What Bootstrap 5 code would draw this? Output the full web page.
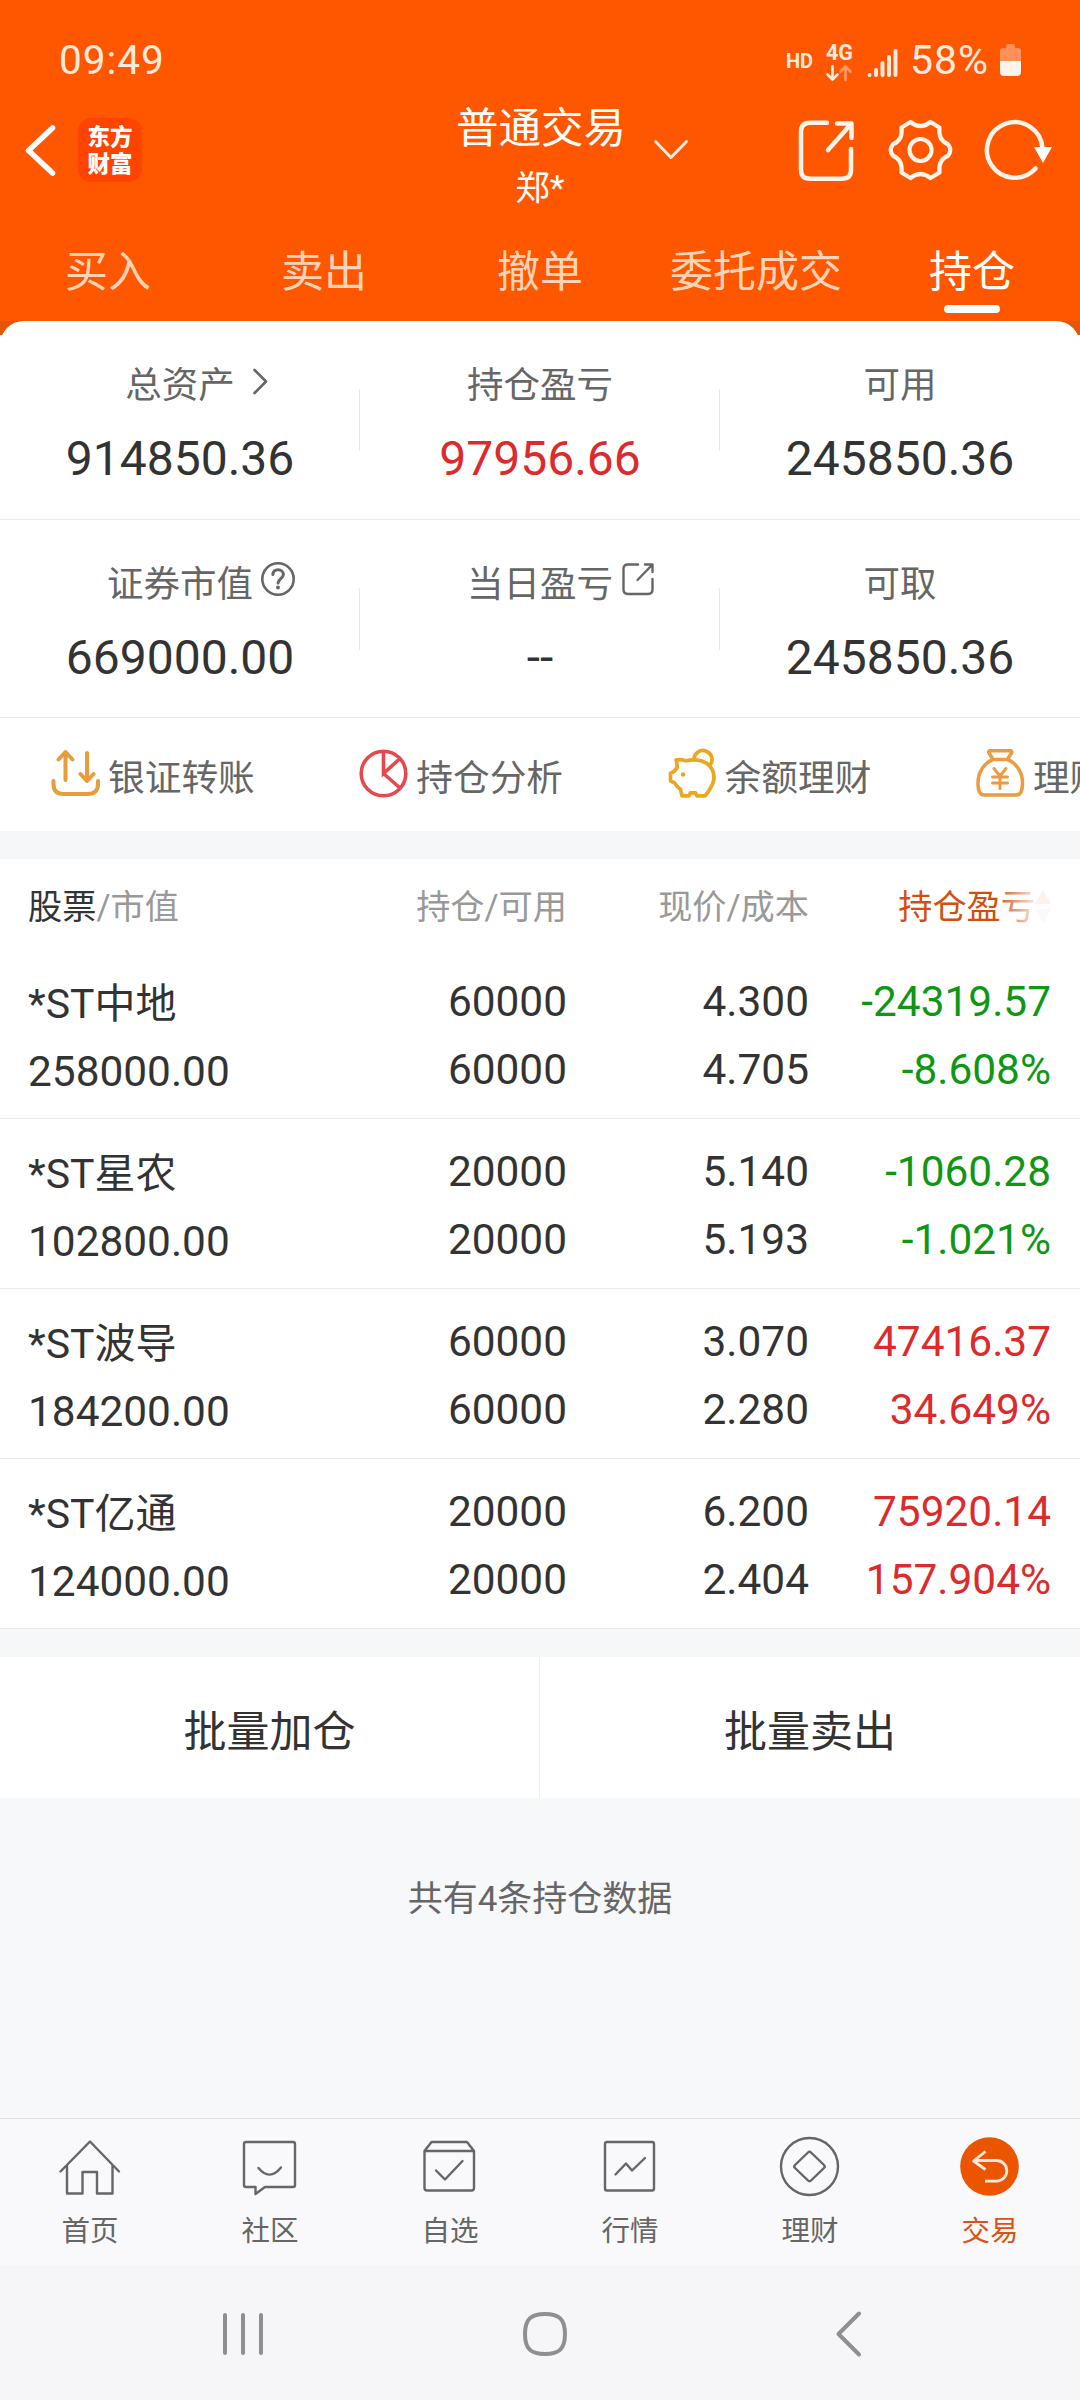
<!DOCTYPE html>
<html lang="zh-CN">
<head>
<meta charset="utf-8">
<meta name="viewport" content="width=device-width, initial-scale=1">
<title>普通交易 - 持仓</title>
<link href="https://cdn.jsdelivr.net/npm/bootstrap@5.3.0/dist/css/bootstrap.min.css" rel="stylesheet">
<style>
body{font-family:Roboto,"Noto Sans CJK SC",sans-serif;background:#f7f8fa;color:#333;width:1080px;height:2400px;overflow:hidden}
svg{display:block;flex:none;overflow:visible}
.app-head{background:#ff5700;color:#fff}
.status-bar{height:88px;padding:32px 59px 0 59px;color:#ffeadd}
.clock{font-size:40.5px;letter-spacing:1px;line-height:57px}
.hd-tag{font-size:20px;font-weight:700;line-height:58px;width:27px;margin-right:13px}
.net-tag{font-size:21.5px;font-weight:700;line-height:20px;width:26px;margin-right:15px;padding-top:11px}
.pct{font-size:41px;line-height:57px;width:84px;margin-left:11px;margin-right:6px;letter-spacing:1px}
.title-bar{height:127px}
.title-side{height:124px;width:456px;flex:none}
.title-mid{padding-top:11px;width:168px}
.title-main{font-size:42.5px;line-height:60px;white-space:nowrap}
.title-user{font-size:34.5px;line-height:58px}
.drop-ic{left:196px;top:49px}
.logo-tile{width:64px;height:64px;border-radius:13px;background:#ff4300;font-size:22.5px;line-height:27px;font-weight:900;margin-left:20px;padding-top:6px}
.tab-row{height:106px}
.tab-it{font-size:43px;line-height:115px;color:#ffd3b8;height:106px}
.tab-it.active{color:#fff}
.tab-it.active::after{content:"";position:absolute;left:50%;margin-left:-28px;bottom:8px;width:56px;height:8px;border-radius:4px;background:#fff}
.sheet-wrap{background:linear-gradient(#e65602 14px,#fff 14px)}
.sheet{background:#fff;border-radius:24px 24px 0 0}
.stat-row{height:198px;border-bottom:1px solid #e9e9e9}
.stat-row.first-row{height:199px}
.stat-cell{padding-top:38px}
.stat-cell+.stat-cell::before{content:"";position:absolute;left:-1px;top:68px;width:1px;height:62px;background:#e9e9e9}
.stat-lab{font-size:36.5px;line-height:54px;color:#666}
.stat-lab svg{position:absolute;top:35px}
.stat-val{font-size:48px;line-height:60px;margin-top:16px}
.c-red{color:#dc2b2c}.c-green{color:#109615}
.quick{height:113px;padding-left:51px;overflow:hidden}
.quick-it{width:308.3px;flex:none;font-size:36.7px;color:#666;line-height:60px;gap:8px;white-space:nowrap}
.quick-it svg{margin-top:-2px}
.quick-it span{padding-top:8px}
.band{height:28px;background:#f6f7f9}
.grid-row{padding:0 29px 0 28px}
.c1{width:300px}.c2{width:239px}.c3{width:242px}.c4{width:242px}
.thead-row{height:90px;font-size:34.2px;line-height:97px;color:#999}
.sort-col{position:relative;color:#d2500f;padding-right:16px}
.sort-col::after{content:"";position:absolute;right:-1px;top:20px;width:56px;height:56px;background:linear-gradient(90deg,rgba(255,255,255,0),rgba(255,255,255,.85) 70%)}
.sort-col svg{position:absolute;right:0;top:31px}
.hold-row{height:170px;border-bottom:1px solid #e9e9e9;font-size:42.4px;line-height:68px;padding-top:19px}
.hold-row .c1{padding-top:2px}
.stk{font-size:41px}
.bulk{height:141px;background:#fff;font-size:43px;line-height:150px}
.bulk>div:first-child{border-right:1px solid #eee}
.note-line{font-size:35px;line-height:60px;color:#666;padding-top:72px;height:320px}
.bottom-nav{height:147px;border-top:1px solid #e0e0e2;background:#f9f9fb;color:#666}
.nav-it svg{margin-top:13px}
.nav-it{font-size:28.5px;line-height:47px}
.nav-it.active{color:#dc5210}
.sys-nav{height:135px;background:#f6f6f8}
</style>
</head>
<body>
<header class="app-head">
  <div class="status-bar d-flex justify-content-between">
    <div class="clock">09:49</div>
    <div class="d-flex">
      <div class="hd-tag">HD</div>
      <div class="net-tag">4G
        <svg width="26" height="16" viewBox="0 0 26 16" fill="none" stroke-width="2.6" stroke-linecap="round" stroke-linejoin="round" style="margin-top:2px"><path stroke="#ffeadd" d="M6.500 1v13M1.500 9.500l5 5 5-5"/><path stroke="#ff9a66" d="M19.500 15V2M14.500 6.500l5-5 5 5"/></svg>
      </div>
      <svg width="32" height="56" viewBox="867 32 32 56" stroke="#ffeadd" stroke-width="4" stroke-linecap="round"><path d="M869.500 75v.01M876 70v5M882.500 63v12M889 57v18M895.500 51v24"/></svg>
      <div class="pct">58%</div>
      <svg width="21" height="56" viewBox="1000 32 21 56"><path fill="#ff905a" d="M1006 48v-2q0-2 2-2h5q2 0 2 2v2h3q3 0 3 3v10h-21V51q0-3 3-3z"/><path fill="#fff3ec" d="M1000 61h21v11q0 4-4 4h-13q-4 0-4-4z"/></svg>
    </div>
  </div>
  <div class="title-bar d-flex">
    <div class="title-side d-flex align-items-center">
      <svg width="34" height="64" viewBox="24 118 34 64" fill="none" stroke="#fff" stroke-width="5.500" stroke-linecap="round" stroke-linejoin="round" class="ms-4"><path d="M52.500 128L28.500 150.500l24 22.500"/></svg>
      <div class="logo-tile text-center">东方<br>财富</div>
    </div>
    <div class="title-mid text-center position-relative">
      <div class="title-main">普通交易</div>
      <div class="title-user">郑*</div>
      <svg class="drop-ic position-absolute" width="38" height="26" viewBox="652 137 38 26" fill="none" stroke="#fff1e8" stroke-width="2.800" stroke-linecap="round" stroke-linejoin="round"><path d="M655.500 141.500L671 157.500l15.500-16"/></svg>
    </div>
    <div class="title-side d-flex align-items-center justify-content-end pe-4">
      <svg width="92" height="66" viewBox="796 117 92 66" fill="none" stroke="#fff3ea" stroke-width="4.500" stroke-linecap="round" stroke-linejoin="round"><path d="M827 122.700H810q-9 0-9 9v38q0 9 9 9h32q9 0 9-9V149M837 123.500h14.500V138M851 124L828 150"/></svg>
      <svg width="94" height="66" viewBox="888 117 94 66" fill="none" stroke="#fff3ea" stroke-width="4.200" stroke-linejoin="round"><circle cx="920.500" cy="150" r="11"/><path d="M910.500 122Q920.500 130 930.500 122L939.500 127.500C938.500 136 941 141.500 948 144.300Q952.500 150 948 155.700C941 158.500 938.500 164 939.500 172.500L930.500 178Q920.500 170 910.500 178L901.500 172.500C902.500 164 900 158.500 893 155.700Q888.500 150 893 144.300C900 141.500 902.500 136 901.500 127.500Z"/></svg>
      <svg width="74" height="66" viewBox="982 117 74 66"><path fill="none" stroke="#fff3ea" stroke-width="4.500" stroke-linecap="round" d="M1035.500 168.500A27.800 27.800 0 1 1 1042.500 148"/><path fill="#fff" d="M1034 147h18l-9 16z"/></svg>
    </div>
  </div>
  <nav class="tab-row d-flex text-center">
    <div class="tab-it flex-fill w-100">买入</div>
    <div class="tab-it flex-fill w-100">卖出</div>
    <div class="tab-it flex-fill w-100">撤单</div>
    <div class="tab-it flex-fill w-100">委托成交</div>
    <div class="tab-it flex-fill w-100 active position-relative">持仓</div>
  </nav>
</header>

<section class="sheet-wrap">
  <div class="sheet">
    <div class="stat-row first-row row g-0 text-center">
      <div class="col-4 stat-cell position-relative"><div class="stat-lab">总资产<svg style="left:250px" width="20" height="54" viewBox="250 356 20 54" fill="none" stroke="#666" stroke-width="2.600" stroke-linecap="round" stroke-linejoin="round"><path d="M254.500 370l11.500 11.500-11.500 11.500"/></svg></div><div class="stat-val">914850.36</div></div>
      <div class="col-4 stat-cell position-relative"><div class="stat-lab">持仓盈亏</div><div class="stat-val c-red">97956.66</div></div>
      <div class="col-4 stat-cell position-relative"><div class="stat-lab">可用</div><div class="stat-val">245850.36</div></div>
    </div>
    <div class="stat-row row g-0 text-center">
      <div class="col-4 stat-cell position-relative"><div class="stat-lab">证券市值<svg style="left:260px" width="36" height="54" viewBox="260 555 36 54" fill="none" stroke="#666" stroke-width="2.600" stroke-linecap="round"><circle cx="278" cy="579" r="15.700"/><path stroke-width="3" d="M272.800 574.500c.3-3 2.500-4.800 5.300-4.800s5.300 2 5.300 4.800c0 4-5.300 4.200-5.300 8.500"/><path stroke-width="3.800" d="M278 587.500v.01"/></svg></div><div class="stat-val">669000.00</div></div>
      <div class="col-4 stat-cell position-relative"><div class="stat-lab">当日盈亏<svg style="left:261px" width="34" height="54" viewBox="621 555 34 54" fill="none" stroke="#666" stroke-width="2.400" stroke-linecap="round" stroke-linejoin="round"><path d="M638 564.500H628q-4.500 0-4.500 4.500v20.500q0 4.500 4.500 4.500h20q4.500 0 4.500-4.500V579M645 564.500h7.500V572M652 565L637.500 580"/></svg></div><div class="stat-val">--</div></div>
      <div class="col-4 stat-cell position-relative"><div class="stat-lab">可取</div><div class="stat-val">245850.36</div></div>
    </div>
    <div class="quick d-flex align-items-center">
      <div class="quick-it d-flex align-items-center"><svg width="49" height="49" viewBox="51 749 49 49" fill="none" stroke="#e89d3c" stroke-width="4" stroke-linecap="round" stroke-linejoin="round"><path d="M53.500 781v3q0 10 10 10h24.500q10 0 10-10v-3M65.500 780v-27M58.500 759.500l7-7.500 7 7.500M87 753v27M80.500 774l6.500 7 6.500-7"/></svg><span>银证转账</span></div>
      <div class="quick-it d-flex align-items-center"><svg width="49" height="49" viewBox="359.500 749.500 49 49" fill="none" stroke="#e5484d" stroke-width="3.600"><circle cx="384" cy="774" r="22.300"/><path d="M384 752v22l16.500-15M384 774l16.500 14.500"/></svg><span>持仓分析</span></div>
      <div class="quick-it d-flex align-items-center"><svg width="49" height="49" viewBox="667.500 749.500 49 49" fill="none" stroke="#eba622" stroke-width="3.700" stroke-linecap="round" stroke-linejoin="round"><path d="M693.500 760a9 9 0 1 1 16.500 5M675.500 760.500c5-1 7.500 0 10 .8c5-1.500 14-1.500 20 2c5 3.500 8 8 8 14.500c0 6-3 10-5.500 14l-3.500 4.500h-8l-1.500-3h-5l-1.500 3h-7l-1.500-6.500c-4-2.500-4.500-5.500-6-6.500l-4-2v-7.500c3-1 5-3 6.500-5.500c1-2-1-5-.5-7.800z"/><circle cx="682.500" cy="775" r="2.300" fill="#eba622" stroke="none"/></svg><span>余额理财</span></div>
      <div class="quick-it d-flex align-items-center"><svg width="49" height="49" viewBox="975.500 749.500 49 49" fill="none" stroke="#eb9b40" stroke-width="3.500" stroke-linecap="round" stroke-linejoin="round"><path d="M992.500 760l-4-6.500q-1-2.200 1.500-2.200h19.500q2.500 0 1.500 2.200l-4 6.500zM992.500 760c-8 3-15 12-15 23.500c0 8 2 12 6 12h32.500c4 0 6-4 6-12c0-11.500-7-20.500-15-23.500"/><path stroke-width="3" d="M993.500 769l6 7.500 6-7.500M992 777.500h15M992 783.500h15M999.500 777v12"/></svg><span>理财</span></div>
    </div>
  </div>
</section>

<div class="band"></div>

<section class="bg-white">
  <div class="grid-row thead-row d-flex text-end">
    <div class="c1 text-start"><span class="text-reset" style="--bs-text-opacity:1"><span class="hd-strong" style="color:#333">股票</span></span>/市值</div>
    <div class="c2">持仓/可用</div>
    <div class="c3">现价/成本</div>
    <div class="c4 sort-col">持仓盈亏<svg width="16" height="34" viewBox="0 0 16 34"><path fill="#f5a98a" d="M8 0l8 14H0z"/><path fill="#d3d6db" d="M8 33L0 19h16z"/></svg></div>
  </div>
  <div class="grid-row hold-row d-flex text-end">
    <div class="c1 text-start"><div class="stk">*ST中地</div><div>258000.00</div></div>
    <div class="c2">60000<br>60000</div><div class="c3">4.300<br>4.705</div><div class="c4 c-green">-24319.57<br>-8.608%</div>
  </div>
  <div class="grid-row hold-row d-flex text-end">
    <div class="c1 text-start"><div class="stk">*ST星农</div><div>102800.00</div></div>
    <div class="c2">20000<br>20000</div><div class="c3">5.140<br>5.193</div><div class="c4 c-green">-1060.28<br>-1.021%</div>
  </div>
  <div class="grid-row hold-row d-flex text-end">
    <div class="c1 text-start"><div class="stk">*ST波导</div><div>184200.00</div></div>
    <div class="c2">60000<br>60000</div><div class="c3">3.070<br>2.280</div><div class="c4 c-red">47416.37<br>34.649%</div>
  </div>
  <div class="grid-row hold-row d-flex text-end">
    <div class="c1 text-start"><div class="stk">*ST亿通</div><div>124000.00</div></div>
    <div class="c2">20000<br>20000</div><div class="c3">6.200<br>2.404</div><div class="c4 c-red">75920.14<br>157.904%</div>
  </div>
</section>

<div class="band"></div>

<div class="bulk d-flex text-center">
  <div class="w-50">批量加仓</div>
  <div class="w-50">批量卖出</div>
</div>
<div class="note-line text-center">共有4条持仓数据</div>

<nav class="bottom-nav row g-0 text-center">
  <div class="col-2 nav-it"><svg class="mx-auto" width="64" height="76" viewBox="58 2132 64 76" fill="none" stroke="#666" stroke-width="2.400" stroke-linecap="round" stroke-linejoin="round"><path d="M60.500 2171.500L90 2141.500l29 30M67 2165v28.500h15.500V2172H97v21.500h15.500V2165"/></svg>首页</div>
  <div class="col-2 nav-it"><svg class="mx-auto" width="64" height="76" viewBox="238 2132 64 76" fill="none" stroke="#666" stroke-width="2.400" stroke-linecap="round" stroke-linejoin="round"><path d="M246 2142h47q2 0 2 2v41q0 2-2 2h-28l-9.500 7v-7H246q-2 0-2-2v-41q0-2 2-2z"/><path d="M258.500 2168q11 13.500 22.500-.5"/></svg>社区</div>
  <div class="col-2 nav-it"><svg class="mx-auto" width="64" height="76" viewBox="418 2132 64 76" fill="none" stroke="#666" stroke-width="2.400" stroke-linecap="round" stroke-linejoin="round"><path d="M424.500 2151l7-9H467l7 9v37q0 2.500-2.500 2.500H427q-2.500 0-2.500-2.500zh49M436 2170.500l9 9 17.500-18.500"/></svg>自选</div>
  <div class="col-2 nav-it"><svg class="mx-auto" width="64" height="76" viewBox="598 2132 64 76" fill="none" stroke="#666" stroke-width="2.400" stroke-linecap="round" stroke-linejoin="round"><rect x="605" y="2142" width="49" height="48.500" rx="2"/><path d="M615.500 2174.500l10.500-11 6 7 13-12.500"/></svg>行情</div>
  <div class="col-2 nav-it"><svg class="mx-auto" width="64" height="76" viewBox="778 2132 64 76" fill="none" stroke="#666" stroke-width="2.400" stroke-linejoin="round"><circle cx="809.500" cy="2166.500" r="28.500"/><path d="M808 2152.500q1.500-1.500 3 0l13 12.500q1.500 1.500 0 3l-13 12.500q-1.500 1.500-3 0l-13-12.500q-1.500-1.500 0-3z"/></svg>理财</div>
  <div class="col-2 nav-it active"><svg class="mx-auto" width="64" height="76" viewBox="958 2132 64 76" fill="none" stroke="#ffe9dc" stroke-width="2.800" stroke-linejoin="round"><circle cx="989.500" cy="2166.500" r="29.300" fill="#eb5500" stroke="none"/><path d="M985.500 2151.500l-12 9.500 12 8.500M974 2160.500h22.500a10.300 10.300 0 0 1 0 20.600H985"/></svg>交易</div>
</nav>
<div class="sys-nav">
  <svg width="1080" height="135" viewBox="0 2265 1080 135" fill="none" stroke="#8f8f8f" stroke-width="4" stroke-linecap="round" stroke-linejoin="round"><path d="M225 2315v38M243 2315v38M261 2315v38"/><path d="M545 2314c14 0 20 5 20 20s-6 20-20 20-20-5-20-20 6-20 20-20z"/><path d="M859 2313.500L838.500 2334l20.500 20.500"/></svg>
</div>
<script src="https://cdn.jsdelivr.net/npm/bootstrap@5.3.0/dist/js/bootstrap.bundle.min.js"></script>
</body>
</html>
